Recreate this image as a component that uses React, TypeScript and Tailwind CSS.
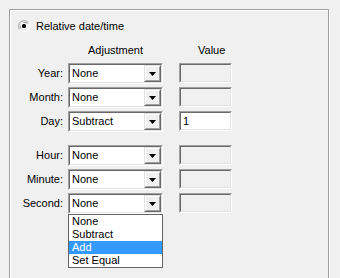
import React from "react";

const rows = [
  { label: "Year:", value: "None", num: "", mt: "mt-[6px]" },
  { label: "Month:", value: "None", num: "", mt: "mt-[3px]" },
  { label: "Day:", value: "Subtract", num: "1", mt: "mt-[3px]" },
  { label: "Hour:", value: "None", num: "", mt: "mt-[13px]" },
  { label: "Minute:", value: "None", num: "", mt: "mt-[3px]" },
  { label: "Second:", value: "None", num: "", mt: "mt-[3px]", open: true },
];

const options = ["None", "Subtract", "Add", "Set Equal"];

function Radio() {
  return (
    <svg width="12" height="12" viewBox="0 0 12 12" className="shrink-0">
      <path d="M10.5 3 A5.5 5.5 0 0 0 1.5 9.5" fill="none" stroke="#a0a0a0" />
      <path d="M9.5 3.5 A4.5 4.5 0 0 0 2.5 8.5" fill="none" stroke="#696969" />
      <path d="M1.5 9.5 A5.5 5.5 0 0 0 10.5 3" fill="none" stroke="#ffffff" />
      <path d="M2.5 8.5 A4.5 4.5 0 0 0 9.5 3.5" fill="none" stroke="#e3e3e3" />
      <circle cx="6" cy="6" r="3.5" fill="#ffffff" />
      <rect x="4" y="4" width="4" height="4" rx="1.5" fill="#000" />
    </svg>
  );
}

function Combo({ value }: { value: string }) {
  return (
    <div className="w-[95px] h-[21px] border border-t-[#a0a0a0] border-l-[#a0a0a0] border-r-white border-b-white">
      <div className="h-full flex items-center bg-white border border-t-[#696969] border-l-[#696969] border-r-[#e3e3e3] border-b-[#e3e3e3]">
        <span className="flex-1 pl-[2px] leading-none">{value}</span>
        <div className="w-[17px] h-[17px] bg-[#f0f0f0] border border-t-[#e3e3e3] border-l-[#e3e3e3] border-r-[#696969] border-b-[#696969]">
          <div className="w-full h-full flex items-center justify-center border border-t-white border-l-white border-r-[#a0a0a0] border-b-[#a0a0a0]">
            <svg width="7" height="4" viewBox="0 0 7 4">
              <path d="M0 0h7L3.5 4z" fill="#000" />
            </svg>
          </div>
        </div>
      </div>
    </div>
  );
}

function ValueBox({ num }: { num: string }) {
  const on = num !== "";
  return (
    <div className="w-[53px] h-[20px] border border-t-[#a0a0a0] border-l-[#a0a0a0] border-r-white border-b-white">
      <div
        className={
          "h-full flex items-center pl-[2px] border border-t-[#696969] border-l-[#696969] border-r-[#e3e3e3] border-b-[#e3e3e3] " +
          (on ? "bg-white" : "bg-[#f0f0f0]")
        }
      >
        {num}
      </div>
    </div>
  );
}

export default function App() {
  return (
    <div className="w-[340px] h-[278px] overflow-hidden bg-[#f0f0f0] text-[11px] text-black font-['Liberation_Sans',Arial,sans-serif]">
      <div className="ml-[9px] mt-[9px] w-[320px] h-[300px] border border-[#a0a0a0] shadow-[inset_1px_1px_0_#fff,1px_1px_0_#fff]">
        <div className="mt-[10px] ml-[8px] flex items-center gap-[6px] h-[12px]">
          <Radio />
          <span className="leading-none">Relative date/time</span>
        </div>
        <div className="mt-[12px] flex h-[13px] items-center">
          <span className="ml-[78px] leading-none">Adjustment</span>
          <span className="ml-[55px] leading-none">Value</span>
        </div>
        {rows.map((r) => (
          <div key={r.label} className={"flex items-start h-[21px] " + r.mt}>
            <span className="w-[53px] h-[21px] flex items-center justify-end leading-none">{r.label}</span>
            <div className="relative ml-[5px]">
              <Combo value={r.value} />
              {r.open && (
                <div className="absolute left-0 top-full w-[95px] border border-[#646464] bg-white">
                  {options.map((o) => (
                    <div
                      key={o}
                      className={
                        "h-[13px] leading-[13px] pl-[3px] " +
                        (o === "Add" ? "bg-[#3399ff] text-white" : "")
                      }
                    >
                      {o}
                    </div>
                  ))}
                </div>
              )}
            </div>
            <div className="ml-[16px]">
              <ValueBox num={r.num} />
            </div>
          </div>
        ))}
      </div>
    </div>
  );
}
